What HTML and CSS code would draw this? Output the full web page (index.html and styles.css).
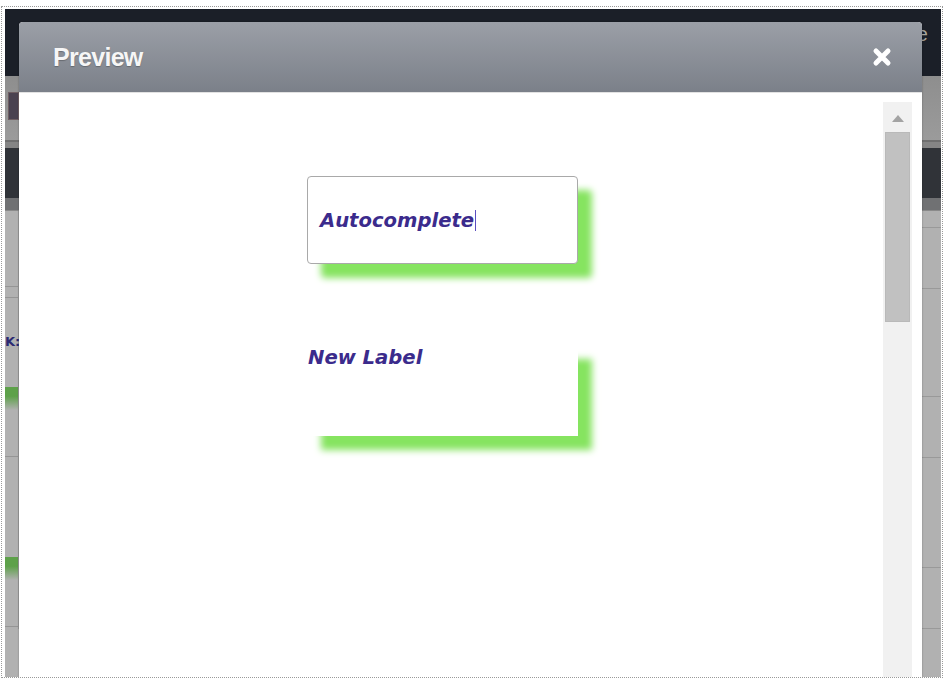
FILE: index.html
```html
<!DOCTYPE html>
<html lang="en">
<head>
  <title>Preview</title>
  <meta charset="utf-8">
  <meta name="viewport" content="width=device-width, initial-scale=1">
  <link rel="stylesheet" href="styles.css">
</head>
<body>
  <div class="frame">
    <div class="page">
      <div class="topbar">
        <span class="topbar-link">Home</span>
      </div>
      <div class="toolbar">
        <span class="tool-icon"></span>
      </div>
      <div class="toolbar-edge"></div>
      <div class="darkband"></div>
      <div class="subbar"></div>
      <div class="content">
        <div class="side">
          <div class="side-block side-a"></div>
          <div class="side-block side-b"></div>
          <div class="side-text">K:</div>
          <div class="side-green"></div>
          <div class="side-block side-c"></div>
          <div class="side-gap"></div>
          <div class="side-green"></div>
          <div class="side-block side-d"></div>
        </div>
        <div class="rows">
          <div class="row row-xs"></div>
          <div class="row row-m"></div>
          <div class="row row-l"></div>
          <div class="row row-m"></div>
          <div class="row row-xl"></div>
          <div class="row row-m"></div>
        </div>
      </div>

      <div class="modal">
        <div class="modal-header">
          <span class="modal-title">Preview</span>
          <button class="modal-close" type="button" aria-label="Close">
            <svg width="20" height="20" viewBox="0 0 20 20">
              <path d="M4 4 L16 16 M16 4 L4 16" stroke="#ffffff" stroke-width="5" stroke-linecap="round" fill="none"/>
            </svg>
          </button>
        </div>
        <div class="modal-body">
          <div class="canvas">
            <div class="field">
              <span class="field-text">Autocomplete</span><span class="caret"></span>
            </div>
            <div class="label-box">
              <span class="label-text">New Label</span>
            </div>
          </div>
          <div class="scrollbar">
            <span class="scroll-arrow"></span>
            <span class="scroll-thumb"></span>
          </div>
        </div>
      </div>
    </div>
  </div>
</body>
</html>
```

FILE: styles.css
```css
*, *::before, *::after {
  margin: 0;
  box-sizing: border-box;
}

body {
  background-color: #FFFFFF;
  font-family: "Liberation Sans", Arial, sans-serif;
}

.frame {
  width: 942px;
  height: 672px;
  margin: 6px 0 0 1px;
  padding: 2px 1px 0 3px;
  border: 1px dotted #9A9A9A;
}

.page {
  position: relative;
  height: 100%;
  overflow: hidden;
  background-color: #B1B1B1;
}

/* page behind the dialog (dimmed) */

.topbar {
  display: flex;
  justify-content: flex-end;
  height: 67px;
  padding: 15px 13px 0 0;
  background-color: #1B1F28;
}

.topbar-link {
  color: #A8A49C;
  font-size: 20px;
  line-height: 1;
}

.toolbar {
  height: 64px;
  padding: 16px 0 0 3px;
  background: linear-gradient(#8E8E8E, #9B9B9B);
}

.tool-icon {
  display: block;
  width: 11px;
  height: 28px;
  background-color: #4A4250;
  border: 1px solid #6E5E62;
}

.toolbar-edge {
  height: 8px;
  border-top: 2px solid #6F6F6F;
  background-color: #858585;
}

.darkband {
  height: 50px;
  background-color: #303338;
}

.subbar {
  height: 13px;
  background-color: #707173;
  border-bottom: 1px solid #8A8A8A;
}

.content {
  display: flex;
}

.side {
  width: 14px;
  border-right: 1px solid #9A9A9A;
}

.side-block {
  border-bottom: 1px solid #959595;
}

.side-a {
  height: 76px;
}

.side-b {
  height: 11px;
}

.side-text {
  height: 89px;
  padding-top: 37px;
  color: #2C2A72;
  font-family: "DejaVu Sans", sans-serif;
  font-size: 13px;
  font-weight: 700;
  line-height: 1;
  white-space: nowrap;
}

.side-green {
  height: 23px;
  background: linear-gradient(#5EA14A 40%, #B1B1B1);
}

.side-c {
  height: 47px;
}

.side-gap {
  height: 100px;
}

.side-d {
  height: 47px;
}

.rows {
  flex: 1;
}

.row {
  border-bottom: 1px solid #999999;
}

.row-xs {
  height: 17px;
}

.row-m {
  height: 61px;
}

.row-l {
  height: 108px;
}

.row-xl {
  height: 110px;
}

/* dialog */

.modal {
  position: absolute;
  left: 14px;
  top: 13px;
  bottom: 0;
  width: 903px;
  display: flex;
  flex-direction: column;
  background-color: #FFFFFF;
  border-radius: 4px 4px 0 0;
  box-shadow: 0 0 2px rgba(0, 0, 0, 0.35);
}

.modal-header {
  display: flex;
  align-items: center;
  justify-content: space-between;
  height: 71px;
  padding: 0 30px 0 34px;
  border-radius: 4px 4px 0 0;
  border-bottom: 1px solid #E2E2E2;
  background: linear-gradient(#9B9FA7, #7B8089);
}

.modal-title {
  color: #F6F6F6;
  font-size: 25px;
  font-weight: 700;
  letter-spacing: -0.7px;
  line-height: 70px;
  text-shadow: 0 1px 1px rgba(0, 0, 0, 0.25);
}

.modal-close {
  display: flex;
  padding: 0;
  border: none;
  background: none;
  cursor: pointer;
}

.modal-body {
  display: flex;
  flex: 1;
}

.canvas {
  flex: 1;
  padding: 83px 0 0 288px;
}

.field {
  display: flex;
  align-items: center;
  width: 271px;
  height: 88px;
  padding-left: 12px;
  border: 1px solid #A9A9A9;
  border-radius: 4px;
  background-color: #FFFFFF;
  box-shadow: 14px 14px 7px #86E460;
}

.field-text, .label-text {
  color: #3B2B8C;
  font-family: "DejaVu Sans", Verdana, sans-serif;
  font-size: 19.6px;
  font-style: italic;
  font-weight: 700;
}

.caret {
  width: 1px;
  height: 21px;
  margin-left: 1px;
  background-color: #5B4FC0;
}

.label-box {
  width: 271px;
  height: 91px;
  margin-top: 81px;
  padding: 1px 0 0 1px;
  background-color: #FFFFFF;
  box-shadow: 14px 14px 7px #86E460;
}

.scrollbar {
  display: flex;
  flex-direction: column;
  align-items: center;
  width: 29px;
  margin: 9px 10px 0 0;
  background-color: #F1F1F1;
}

.scroll-arrow {
  width: 0;
  height: 0;
  margin-top: 13px;
  border-left: 6px solid transparent;
  border-right: 6px solid transparent;
  border-bottom: 7px solid #A3A3A3;
}

.scroll-thumb {
  width: 25px;
  height: 190px;
  margin-top: 10px;
  background-color: #C1C1C1;
  border: 1px solid #B9B9B9;
}
```
